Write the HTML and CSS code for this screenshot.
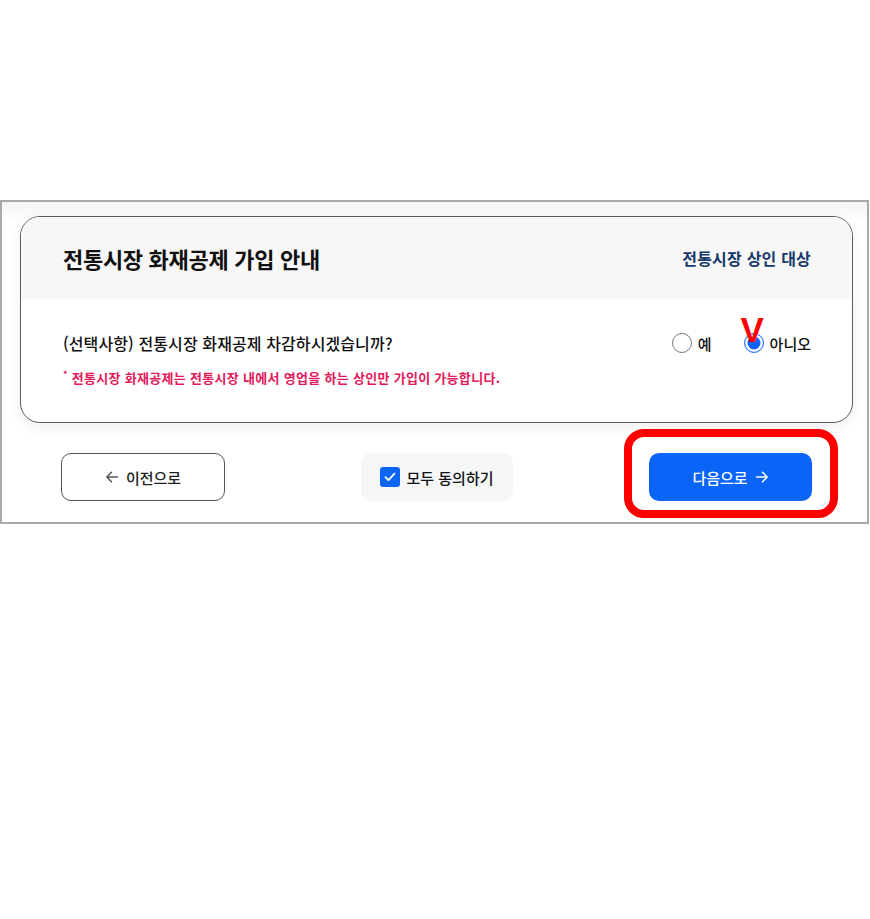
FILE: index.html
```html
<!DOCTYPE html>
<html lang="ko">
<head>
<meta charset="utf-8">
<title>전통시장 화재공제 가입 안내</title>
<link rel="stylesheet" href="styles.css">
</head>
<body>
<div class="frame">
  <section class="card">
    <header class="card-head">
      <h1 class="title">전통시장 화재공제 가입 안내</h1>
      <span class="target">전통시장 상인 대상</span>
    </header>
    <div class="card-body">
      <div class="question-row">
        <p class="question">(선택사항) 전통시장 화재공제 차감하시겠습니까?</p>
        <div class="radios">
          <label class="radio"><span class="dot"></span><span>예</span></label>
          <label class="radio checked"><span class="dot"></span><span>아니오</span><span class="mark-v">V</span></label>
        </div>
      </div>
      <p class="note"><span class="ast">*</span> 전통시장 화재공제는 전통시장 내에서 영업을 하는 상인만 가입이 가능합니다.</p>
    </div>
  </section>
  <div class="actions">
    <button class="btn btn-prev">
      <svg width="14" height="14" viewBox="0 0 14 14"><path d="M12.5 7H1.8M6.5 2.2L1.8 7l4.7 4.8" fill="none" stroke="#555" stroke-width="1.5" stroke-linecap="round" stroke-linejoin="round"/></svg>
      <span>이전으로</span>
    </button>
    <label class="agree">
      <span class="check"><svg width="12" height="10" viewBox="0 0 12 10"><path d="M1.5 5.2l3 3 6-6.5" fill="none" stroke="#fff" stroke-width="1.8" stroke-linecap="round" stroke-linejoin="round"/></svg></span>
      <span>모두 동의하기</span>
    </label>
    <div class="next-wrap">
      <button class="btn btn-next">
        <span>다음으로</span>
        <svg width="14" height="14" viewBox="0 0 14 14"><path d="M1.5 7h10.7M7.5 2.2L12.2 7l-4.7 4.8" fill="none" stroke="#fff" stroke-width="1.5" stroke-linecap="round" stroke-linejoin="round"/></svg>
      </button>
      <span class="highlight"></span>
    </div>
  </div>
</div>
</body>
</html>
```

FILE: styles.css
```css
* { box-sizing: border-box; }
html, body { margin: 0; padding: 0; background: #fff; }
body {
  font-family: "Noto Sans CJK KR", "Noto Sans", sans-serif;
  color: #111;
  width: 870px;
  height: 919px;
}
.frame {
  margin-top: 200px;
  width: 869px;
  height: 324px;
  border: 2px solid #a9a9a9;
  padding: 14px 0 0 18px;
  background: linear-gradient(#f4f4f4, #fff 20px);
}
.card {
  width: 833px;
  height: 207px;
  border: 1px solid #5c5c5c;
  border-radius: 20px;
  overflow: hidden;
  background: #fff;
  box-shadow: 0 4px 14px rgba(0,0,0,0.07);
}
.card-head {
  height: 82px;
  background: #f7f7f7;
  display: flex;
  align-items: center;
  justify-content: space-between;
  padding: 0 41px 0 42px;
}
.title {
  margin: 0;
  font-size: 22px;
  font-weight: 700;
  letter-spacing: -0.3px;
}
.target {
  font-size: 16px;
  font-weight: 700;
  color: #17386b;
  letter-spacing: 0.2px;
}
.card-body {
  padding: 32px 41px 0 42px;
}
.question-row {
  display: flex;
  align-items: center;
  justify-content: space-between;
  height: 24px;
}
.question {
  margin: 0;
  font-size: 16px;
  font-weight: 500;
  letter-spacing: 0.1px;
}
.radios {
  display: flex;
  align-items: center;
  gap: 32px;
}
.radio {
  position: relative;
  display: flex;
  align-items: center;
  gap: 6px;
  font-size: 15px;
  font-weight: 500;
}
.dot {
  width: 20px;
  height: 20px;
  border-radius: 50%;
  border: 1.5px solid #767676;
  background: #fff;
}
.checked .dot {
  border: 1.5px solid #1a6bff;
  box-shadow: inset 0 0 0 2.5px #fff, inset 0 0 0 10px #0a63f5;
}
.mark-v {
  position: absolute;
  left: -3px;
  top: -21px;
  font-family: "Liberation Sans", Arial, sans-serif;
  font-weight: 700;
  font-size: 35px;
  line-height: 35px;
  color: #ff0000;
}
.note {
  margin: 10px 0 0;
  font-size: 13px;
  font-weight: 700;
  color: #e3195b;
  line-height: 19px;
  letter-spacing: 0.3px;
}
.ast {
  font-size: 9px;
  vertical-align: 5px;
}
.actions {
  display: flex;
  align-items: center;
  justify-content: space-between;
  width: 833px;
  padding: 0 41px;
  margin-top: 30px;
}
.btn {
  width: 164px;
  height: 48px;
  border-radius: 10px;
  display: flex;
  align-items: center;
  justify-content: center;
  gap: 7px;
  font-family: inherit;
  font-size: 15px;
  font-weight: 500;
  padding: 0;
  cursor: pointer;
}
.btn-prev {
  background: #fff;
  border: 1px solid #555;
  color: #222;
}
.agree {
  width: 152px;
  height: 48px;
  border-radius: 10px;
  background: #f5f6f8;
  display: flex;
  align-items: center;
  justify-content: center;
  gap: 6px;
  font-size: 15px;
  font-weight: 500;
}
.check {
  width: 20px;
  height: 20px;
  border-radius: 3px;
  background: #0b64f4;
  display: flex;
  align-items: center;
  justify-content: center;
}
.next-wrap {
  position: relative;
}
.btn-next {
  width: 163px;
  background: #0a64f7;
  border: none;
  color: #fff;
}
.highlight {
  position: absolute;
  left: -25px;
  top: -24px;
  width: 214px;
  height: 89px;
  border: 8px solid #ff0000;
  border-radius: 20px;
  pointer-events: none;
}
```
